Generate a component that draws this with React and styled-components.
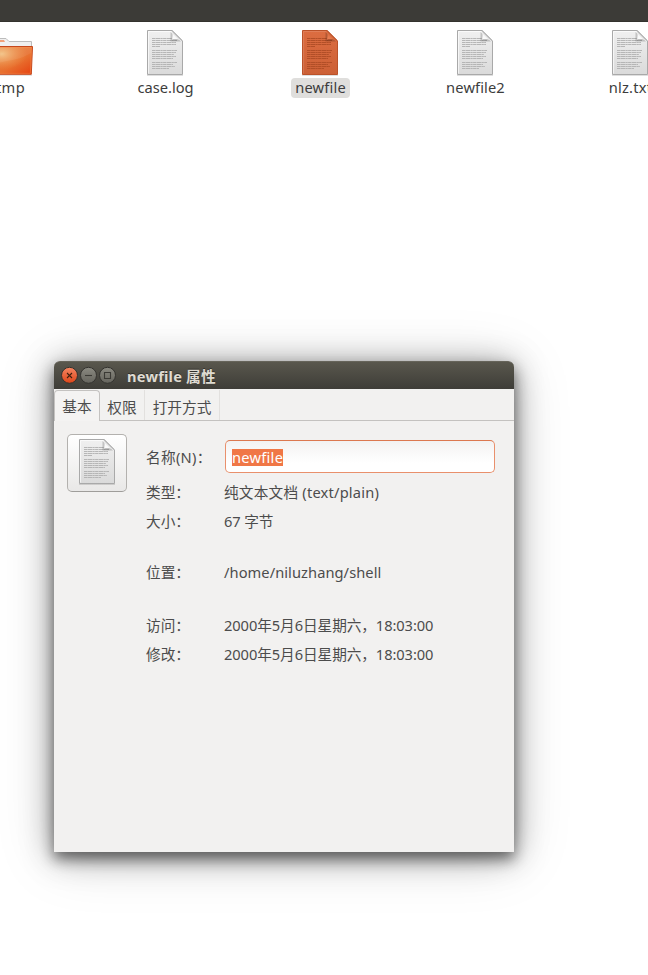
import React from "react";
import styled, { createGlobalStyle, css } from "styled-components";

const GlobalStyle = createGlobalStyle`
  * { box-sizing: border-box; }
  html, body { margin: 0; background: #fff; }
  body {
    overflow: hidden;
    font-family: "Noto Sans", "Noto Sans CJK SC", sans-serif;
    font-size: 14.667px;
    color: #3c3c3c;
  }
`;

const Desktop = styled.main`
  position: relative;
  width: 648px;
  height: 975px;
  overflow: hidden;
  background: #fff;
`;

const TopBar = styled.header`
  height: 22px;
  background: #3c3b37;
  border-bottom: 1px solid #33322e;
`;

const FileGrid = styled.section`
  display: grid;
  grid-template-columns: repeat(5, 155px);
  margin-left: -67px;
  padding-top: 6px;
`;

const FileItem = styled.div`
  display: flex;
  flex-direction: column;
  align-items: center;
  padding-right: 1px;
`;

const FileLabel = styled.span`
  height: 20px;
  margin: 2px -1px 0 0;
  padding: 0 4px;
  border-radius: 4px;
  line-height: 19px;
  white-space: nowrap;
  letter-spacing: ${(p) => p.$spacing || 0}px;
  background: ${(p) => (p.$selected ? "#dfdedc" : "transparent")};
`;

const Dialog = styled.section`
  position: absolute;
  left: 54px;
  top: 361px;
  width: 460px;
  height: 491px;
  display: flex;
  flex-direction: column;
  border-radius: 6px 6px 0 0;
  background: #f2f1f0;
  color: #4c4c4c;
  box-shadow: 0 7px 14px rgba(0, 0, 0, 0.48), 0 4px 32px rgba(0, 0, 0, 0.38),
    0 5px 60px rgba(0, 0, 0, 0.15);
`;

const TitleBar = styled.header`
  flex: none;
  display: flex;
  align-items: center;
  gap: 1px;
  height: 28px;
  padding: 0 0 1px 6px;
  border-radius: 6px 6px 0 0;
  border-top: 1px solid #66645a;
  background: linear-gradient(#59574d, #3e3d38);
`;

const WindowButton = styled.button`
  display: block;
  width: 18px;
  height: 18px;
  padding: 0;
  border: 0;
  background: none;
  svg { display: block; }
`;

const Title = styled.h1`
  margin: 1px 0 0 10px;
  font-size: 14.667px;
  line-height: 20px;
  font-weight: 700;
  letter-spacing: 0.2px;
  white-space: nowrap;
  color: #dfdbd2;
  text-shadow: 0 -1px 0 rgba(0, 0, 0, 0.4);
`;

const Tabs = styled.nav`
  flex: none;
  display: flex;
  height: 32px;
  padding-top: 1px;
  border-bottom: 1px solid #c4c2c0;
`;

const Tab = styled.button`
  width: ${(p) => p.$width}px;
  height: 30px;
  padding: 3px 0 0;
  border: 0;
  border-right: 1px solid #e2e0de;
  background: none;
  font: inherit;
  line-height: 22px;
  color: inherit;
  text-align: center;
  ${(p) =>
    p.$active &&
    css`
      height: 31px;
      padding: 0;
      border: 1px solid #c4c2c0;
      border-bottom: 0;
      border-radius: 4px 4px 0 0;
      background: #f4f3f2;
    `}
`;

const Panel = styled.div`
  display: flex;
  gap: 19px;
  padding: 13px 19px 0 13px;
`;

const IconButton = styled.button`
  flex: none;
  width: 60px;
  height: 58px;
  display: flex;
  justify-content: center;
  padding: 2px 0 0;
  border: 1px solid #b3b1ae;
  border-bottom-color: #9f9d9a;
  border-radius: 5px;
  background: linear-gradient(#fff, #e9e8e7);
`;

const Fields = styled.dl`
  flex: 1;
  display: grid;
  grid-template-columns: 78px 1fr;
  grid-template-rows: 45px 26px 32px 70px 36px 22px;
  align-items: center;
  margin: 0;
  line-height: 22px;
  white-space: nowrap;
`;

const Term = styled.dt`
  margin: 0;
  letter-spacing: ${(p) => p.$spacing || 0}px;
`;

const Value = styled.dd`
  margin: 0;
  letter-spacing: ${(p) => p.$spacing || 0}px;
`;

const Entry = styled.div`
  display: flex;
  align-items: center;
  width: 270px;
  height: 33px;
  margin-left: 1px;
  padding: 2px 0 0 6px;
  border: 1px solid #e9906c;
  border-top-color: #dc7850;
  border-radius: 5px;
  background: linear-gradient(#f3f2f2, #fff 70%);
`;

const Selection = styled.span`
  height: 17px;
  line-height: 17px;
  background: #f07746;
  color: #fff;
`;

const LINES = [
  [8, 25], [10, 25], [12, 24], [14, 24], [16, 8],
  [20, 25], [22, 24], [24, 22], [26, 24], [28, 21],
  [32, 25], [34, 21], [36, 23], [38, 17],
];

function DocumentIcon({ id, orange }) {
  const edge = orange ? "#bb5229" : "#a9a9a9";
  return (
    <svg width="48" height="48" viewBox="-6 -2 48 48" aria-hidden="true">
      <defs>
        <linearGradient id={`${id}-page`} x1="0" y1="0" x2="0" y2="1">
          <stop offset="0" stopColor={orange ? "#dc6d41" : "#f0f0f0"} />
          <stop offset="1" stopColor={orange ? "#cc6036" : "#dadada"} />
        </linearGradient>
        <linearGradient id={`${id}-fold`} x1="0" y1="1" x2="1" y2="0">
          <stop offset="0" stopColor={orange ? "#f28a60" : "#ffffff"} />
          <stop offset="0.35" stopColor={orange ? "#e17548" : "#f8f8f8"} />
          <stop offset="0.65" stopColor={orange ? "#b74f28" : "#b2b2b2"} />
        </linearGradient>
      </defs>
      <path d="M0 45.4H36" stroke="#000" strokeOpacity="0.14" />
      <path d="M.5.5H25.2L35.5 10.8V44.5H.5Z" fill={`url(#${id}-page)`} stroke={edge} />
      <path d="M1.5 43.5V1.5H24" fill="none" stroke="#fff" strokeOpacity={orange ? 0.12 : 0.65} />
      {LINES.map(([y, w]) => (
        <path
          key={y}
          d={`M5 ${y + 0.5}h${w}`}
          stroke={orange ? "#ae4c25" : "#b0b0b0"}
          strokeDasharray="3 .4 5 .3 2 .4"
          strokeWidth="0.9"
        />
      ))}
      <path d="M23.5 2V11.5H34Z" fill="#000" opacity="0.18" />
      <path d="M25 1C25.8 4 25.8 6.5 25 9.5C28 8.7 32 9.2 35 10.8Z" fill={`url(#${id}-fold)`} />
      <path d="M25 .8L35.3 11" fill="none" stroke={edge} strokeWidth="0.8" />
    </svg>
  );
}

function FolderIcon() {
  return (
    <svg width="48" height="48" viewBox="0 0 48 48" aria-hidden="true">
      <defs>
        <linearGradient id="folder-front" x1="0" y1="0" x2="1" y2="1">
          <stop offset="0" stopColor="#e88f50" />
          <stop offset="0.62" stopColor="#e8702f" />
          <stop offset="1" stopColor="#e5400f" />
        </linearGradient>
        <radialGradient id="folder-glow" cx="0.3" cy="0.25" r="0.6">
          <stop offset="0" stopColor="#f3c98b" stopOpacity="0.9" />
          <stop offset="1" stopColor="#f19b50" stopOpacity="0" />
        </radialGradient>
      </defs>
      <path d="M2 47.2H46" stroke="#000" strokeOpacity="0.14" strokeWidth="1.2" />
      <path d="M2 20V10.5H20L23 13.5H45.5V22H2Z" fill="#efefef" stroke="#bcbcbc" />
      <path d="M5 12H18L19 14H5Z" fill="#f1a079" />
      <path d="M2 18.5H46.5L45.3 46.3H3Z" fill="url(#folder-front)" stroke="#c5481c" />
      <path d="M3 19.5H45.5L44.4 45.3H4Z" fill="url(#folder-glow)" stroke="#ff9a5c" strokeOpacity="0.35" />
      <path d="M3 39C15 31 29 35 45 25V19.5H3Z" fill="#fff" opacity="0.07" />
    </svg>
  );
}

function ControlIcon({ kind }) {
  const close = kind === "close";
  return (
    <svg width="18" height="18" viewBox="0 0 18 18" aria-hidden="true">
      <defs>
        <linearGradient id={`control-${kind}`} x1="0" y1="0" x2="0" y2="1">
          <stop offset="0" stopColor={close ? "#f58662" : "#8b8a81"} />
          <stop offset="1" stopColor={close ? "#dd4519" : "#65645d"} />
        </linearGradient>
      </defs>
      <circle cx="9.5" cy="9.3" r="8" fill={`url(#control-${kind})`} stroke="#34332f" />
      <g fill="none" stroke="#3b3a35" strokeWidth="1.1">
        {close && <path d="m7 7 5 5m0-5-5 5" stroke="#40200f" />}
        {kind === "minimize" && <path d="M6 9.5h7" />}
        {kind === "maximize" && <path d="M6.5 6.5h6v6h-6z" />}
      </g>
    </svg>
  );
}

const FILES = [
  { name: "tmp", folder: true, spacing: 0.3 },
  { name: "case.log" },
  { name: "newfile", selected: true, spacing: 0.18 },
  { name: "newfile2", spacing: 0.12 },
  { name: "nlz.txt", spacing: 0.2 },
];

export default function App() {
  return (
    <>
      <GlobalStyle />
      <Desktop>
        <TopBar />
        <FileGrid>
          {FILES.map((file, i) => (
            <FileItem key={file.name}>
              {file.folder ? <FolderIcon /> : <DocumentIcon id={`file-${i}`} orange={file.selected} />}
              <FileLabel $selected={file.selected} $spacing={file.spacing}>{file.name}</FileLabel>
            </FileItem>
          ))}
        </FileGrid>
        <Dialog>
          <TitleBar>
            {["close", "minimize", "maximize"].map((kind) => (
              <WindowButton key={kind} aria-label={kind}>
                <ControlIcon kind={kind} />
              </WindowButton>
            ))}
            <Title>newfile 属性</Title>
          </TitleBar>
          <Tabs>
            <Tab $width={46} $active>基本</Tab>
            <Tab $width={45}>权限</Tab>
            <Tab $width={75}>打开方式</Tab>
          </Tabs>
          <Panel>
            <IconButton aria-label="icon">
              <DocumentIcon id="preview" />
            </IconButton>
            <Fields>
              <Term $spacing={0.3}>名称(N)：</Term>
              <Value $spacing={0.25}><Entry><Selection>newfile</Selection></Entry></Value>
              <Term>类型：</Term>
              <Value $spacing={0.2}>纯文本文档 (text/plain)</Value>
              <Term>大小：</Term>
              <Value $spacing={-0.15}>67 字节</Value>
              <Term>位置：</Term>
              <Value $spacing={0.06}>/home/niluzhang/shell</Value>
              <Term>访问：</Term>
              <Value $spacing={-0.08}>2000年5月6日星期六，18:03:00</Value>
              <Term>修改：</Term>
              <Value $spacing={-0.08}>2000年5月6日星期六，18:03:00</Value>
            </Fields>
          </Panel>
        </Dialog>
      </Desktop>
    </>
  );
}
